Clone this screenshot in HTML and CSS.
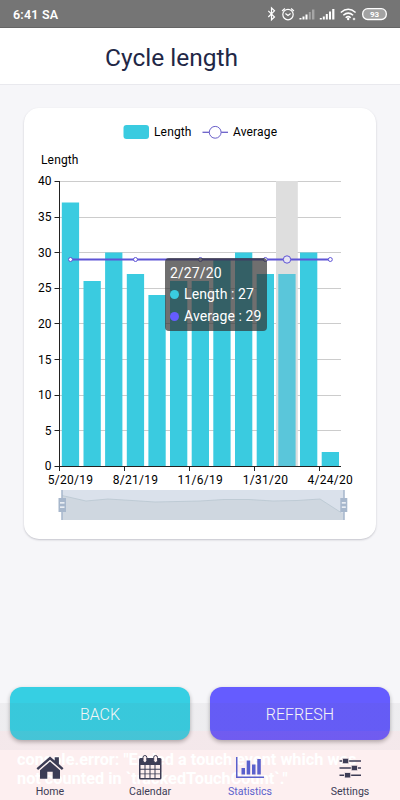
FILE: index.html
```html
<!DOCTYPE html>
<html lang="en">
<head>
    <meta charset="UTF-8">
    <meta name="viewport" content="width=device-width, initial-scale=1.0">
    <title>Cycle length</title>
    <link rel="stylesheet" href="styles.css">
</head>
<body>
    <div class="screen">
        <div class="statusbar">
            <span class="clock">6:41 SA</span>
            <svg class="status-icons" width="122" height="16" viewBox="266 6 122 16">
                <path d="M268.3 10.8l6.2 6.2-3 2.8V8l3 2.8-6.2 6.2" fill="none" stroke="#fff" stroke-width="1.2"/>
                <g fill="none" stroke="#fff" stroke-width="1.2">
                    <circle cx="288" cy="14.6" r="5.2"/>
                    <path d="M285.4 13.6l2.6 2 2.6-2M282.1 11l2.8-2.5M293.9 11l-2.8-2.5"/>
                </g>
                <g fill="#fff">
                    <path d="M299.5 18h2v1.5h-2zM302.5 16.5h2v3h-2zM305.5 14.5h2v5h-2z"/>
                    <path d="M308.8 12h2v7.5h-2zM312 9.5h2.4v10H312z" opacity=".35"/>
                    <path d="M319.8 18h2v1.5h-2zM322.8 16.5h2v3h-2zM325.8 14h2v5.5h-2zM329 11.5h2v8h-2zM332.2 9h2.2v10.5h-2.2z"/>
                </g>
                <path d="M340.8 12.5q7.4-6.5 14.8 0M343.3 15.3q4.9-4.3 9.8 0M345.7 17.7q2.5-2.2 5 0" fill="none" stroke="#fff" stroke-width="1.5"/>
                <circle cx="348.2" cy="19" r="1.2" fill="#fff"/>
                <circle cx="354" cy="19" r="1.3" fill="#ddd"/>
                <rect x="362.7" y="8.7" width="23.6" height="10.8" rx="5" fill="#a2a2a2" stroke="#fff" stroke-width="1.3"/>
                <text class="battery" x="374.5" y="17">93</text>
            </svg>
        </div>

        <header class="header">
            <h1>Cycle length</h1>
        </header>

        <main class="content">
            <div class="card">
                <svg class="chart" width="352" height="431" viewBox="24 108 352 431">
                    <!-- legend -->
                    <rect x="123.5" y="125" width="25.5" height="14" rx="3" fill="#3acbe0"/>
                    <text class="label" x="154" y="136.3">Length</text>
                    <path d="M202.5 132.3h25.5" stroke="#6a5fc9" stroke-width="1.3"/>
                    <circle cx="215.2" cy="132.3" r="5.9" fill="#fff" stroke="#6a5fc9"/>
                    <text class="label" x="233" y="136.3">Average</text>
                    <text class="label" x="41" y="163.5">Length</text>

                    <!-- grid lines -->
                    <path class="grid" d="M60 181.5H341M60 217.5H341M60 252.5H341M60 288.5H341M60 323.5H341M60 359.5H341M60 395.5H341M60 430.5H341"/>

                    <!-- highlighted column -->
                    <rect x="276" y="181" width="21.8" height="285.5" fill="#dedede"/>

                    <g class="bars">
                        <rect x="61.8" y="202.5" width="17.3" height="264"/>
                        <rect x="83.5" y="281" width="17.3" height="185.5"/>
                        <rect x="105.1" y="252.5" width="17.3" height="214"/>
                        <rect x="126.8" y="274" width="17.3" height="192.5"/>
                        <rect x="148.4" y="295" width="17.3" height="171.5"/>
                        <rect x="170" y="281" width="17.3" height="185.5"/>
                        <rect x="191.7" y="281" width="17.3" height="185.5"/>
                        <rect x="213.3" y="259.5" width="17.3" height="207"/>
                        <rect x="235" y="252.5" width="17.3" height="214"/>
                        <rect x="256.7" y="274" width="17.3" height="192.5"/>
                        <rect class="active" x="278.3" y="274" width="17.3" height="192.5"/>
                        <rect x="300" y="252.5" width="17.3" height="214"/>
                        <rect x="321.7" y="452" width="17.3" height="14.5"/>
                    </g>

                    <!-- axes -->
                    <path class="axis" d="M59.5 181V471M54.5 466.5H341M54.5 181.5h5M54.5 217.5h5M54.5 252.5h5M54.5 288.5h5M54.5 323.5h5M54.5 359.5h5M54.5 395.5h5M54.5 430.5h5M124.5 467v4M189.5 467v4M254.5 467v4M319.5 467v4"/>
                    <g class="y-labels">
                        <text x="51.5" y="185.3">40</text>
                        <text x="51.5" y="221">35</text>
                        <text x="51.5" y="256.7">30</text>
                        <text x="51.5" y="292.3">25</text>
                        <text x="51.5" y="328">20</text>
                        <text x="51.5" y="363.6">15</text>
                        <text x="51.5" y="399.2">10</text>
                        <text x="51.5" y="434.8">5</text>
                        <text x="51.5" y="470.3">0</text>
                    </g>
                    <g class="x-labels">
                        <text x="70.5" y="484.3">5/20/19</text>
                        <text x="135.5" y="484.3">8/21/19</text>
                        <text x="200.3" y="484.3">11/6/19</text>
                        <text x="265.5" y="484.3">1/31/20</text>
                        <text x="330.3" y="484.3">4/24/20</text>
                    </g>

                    <!-- average line -->
                    <path d="M70.5 259.5H330.5" stroke="#5f54d6" stroke-width="2"/>
                    <g class="points">
                        <circle cx="70.5" cy="259.5" r="2"/>
                        <circle cx="135.5" cy="259.5" r="2"/>
                        <circle cx="200.4" cy="259.5" r="2"/>
                        <circle cx="265.4" cy="259.5" r="2"/>
                        <circle class="current" cx="287" cy="259.5" r="3.7"/>
                        <circle cx="330.3" cy="259.5" r="2"/>
                    </g>

                    <!-- zoom slider -->
                    <rect x="62" y="490" width="282" height="30" fill="#dae1eb"/>
                    <path d="M62 495.5L86 501 108 499 132 500.5 155 502 178 501.5 200 501 224 499.5 249 499.5 273 501 297 500.5 320 499 341 512.5 344 513V520H62z" fill="#cfd7e0"/>
                    <path d="M62 495.5L86 501 108 499 132 500.5 155 502 178 501.5 200 501 224 499.5 249 499.5 273 501 297 500.5 320 499 341 512.5" fill="none" stroke="#b9c6d1" stroke-width=".8"/>
                    <path d="M62 490v30M344 490v30" stroke="#a7b7cc" stroke-width="1.5"/>
                    <path d="M58.5 498h7.5v14h-7.5zM340.3 498h7v14h-7z" fill="#a7b7cc"/>
                    <path d="M60 502.8h4.5M60 507.2h4.5M341.8 502.8h4M341.8 507.2h4" stroke="#fff" stroke-width="1.2"/>
                </svg>

                <div class="tooltip">
                    <p>2/27/20</p>
                    <p><span class="dot cyan"></span>Length : 27</p>
                    <p><span class="dot violet"></span>Average : 29</p>
                </div>
            </div>
        </main>

        <div class="actions">
            <button class="back">BACK</button>
            <button class="refresh">REFRESH</button>
        </div>

        <div class="warning">
            <p>console.error: "Ended a touch event which was not counted in `trackedTouchCount`."</p>
        </div>

        <nav class="tabs">
            <a class="tab">
                <svg width="30" height="30" viewBox="0 0 30 30" fill="currentColor">
                    <path d="M1.5 15.2L15 3.5l4.7 4V4.2h4.2v6.9l4.6 4.1-1.6 1.8L15 6.7 3.1 17z"/>
                    <path d="M5 17.2l10-8.6 10 8.6v8.6h-7.3v-7h-5.4v7H5z"/>
                </svg>
                Home
            </a>
            <a class="tab">
                <svg width="30" height="30" viewBox="0 0 30 30">
                    <rect x="4" y="5" width="22.5" height="21.5" rx="1.5" fill="currentColor"/>
                    <path d="M5.5 12h4v3.8h-4zM10.5 12h4v3.8h-4zM15.5 12h4v3.8h-4zM20.5 12H25v3.8h-4.5zM5.5 16.7h4v3.7h-4zM10.5 16.7h4v3.7h-4zM15.5 16.7h4v3.7h-4zM20.5 16.7H25v3.7h-4.5zM5.5 21.3h4V25h-4zM10.5 21.3h4V25h-4zM15.5 21.3h4V25h-4zM20.5 21.3H25V25h-4.5z" fill="#fdeff0"/>
                    <rect x="8" y="2.5" width="3.8" height="7" rx="1.9" fill="#fdeff0" stroke="currentColor"/>
                    <rect x="18.7" y="2.5" width="3.8" height="7" rx="1.9" fill="#fdeff0" stroke="currentColor"/>
                </svg>
                Calendar
            </a>
            <a class="tab selected">
                <svg width="30" height="30" viewBox="0 0 30 30" fill="currentColor">
                    <path d="M1 4h1.5v19.5H29V25H1zM6.500 15H10v6.500H6.500zM11.700 7.500h3.500v14h-3.500zM17 11.500h3.500v10H17zM22.300 6h3.500v15.500h-3.500z"/>
                </svg>
                Statistics
            </a>
            <a class="tab">
                <svg width="30" height="30" viewBox="0 0 30 30" fill="currentColor">
                    <path d="M4.5 7.2H26v1.6H4.500zM4.500 14.2H26v1.600H4.500zM4.500 21.400H26V23H4.500z"/>
                    <path d="M7.500 5.300h6.200v5.400H7.500zM16.300 12.300h6.200v5.400h-6.200zM9.500 19.500h6.200v5.400H9.500z" stroke="#fdeff0" stroke-width=".8"/>
                </svg>
                Settings
            </a>
        </nav>
    </div>
</body>
</html>
```
FILE: styles.css
```css
body{
    margin: 0;
    font-family: Roboto, sans-serif;
}

.screen{
    position: relative;
    display: flex;
    flex-direction: column;
    width: 400px;
    height: 800px;
    background-color: #f6f6f9;
    overflow: hidden;
}

.statusbar{
    display: flex;
    justify-content: space-between;
    align-items: center;
    box-sizing: border-box;
    height: 28px;
    padding: 0 12px 0 13px;
    background-color: #757575;
    border-bottom: 1px solid #656565;
    color: white;
}

.clock{
    font-size: 12.5px;
    font-weight: 600;
    letter-spacing: 0.2px;
    padding-top: 2px;
}

.battery{
    fill: white;
    font-size: 8px;
    font-weight: bold;
    text-anchor: middle;
}

.header{
    box-sizing: border-box;
    height: 57px;
    padding: 15px 105px;
    background-color: white;
    border-bottom: 1px solid #e9e9ee;
}

h1{
    margin: 0;
    font-size: 24.5px;
    line-height: 30px;
    font-weight: 400;
    color: #222746;
    white-space: nowrap;
}

.content{
    flex: 1;
    padding: 23px 24px;
}

.card{
    position: relative;
    width: 352px;
    height: 431px;
    border-radius: 15px;
    background-color: white;
    box-shadow: 0 1px 2px rgba(50, 50, 70, 0.25);
}

.chart{
    display: block;
    font-size: 12px;
}

.label{
    letter-spacing: 0.15px;
}

.grid{
    fill: none;
    stroke: #cccccc;
}

.axis{
    fill: none;
    stroke: #222222;
}

.bars{
    fill: #3acbe0;
}

.active{
    fill: #5ac6da;
}

.y-labels{
    text-anchor: end;
}

.x-labels{
    text-anchor: middle;
    letter-spacing: 0.3px;
}

.points{
    fill: white;
    stroke: #5f54d6;
    stroke-width: 1;
}

.current{
    fill: #e6e4f2;
}

.tooltip{
    position: absolute;
    left: 141px;
    top: 150px;
    box-sizing: border-box;
    width: 102px;
    height: 73px;
    padding: 5px;
    border-radius: 4px;
    background-color: rgba(50, 50, 50, 0.7);
    color: white;
    font-size: 14px;
    line-height: 21.3px;
    letter-spacing: 0.1px;
    white-space: nowrap;
}

.tooltip p{
    margin: 0;
}

.dot{
    display: inline-block;
    width: 9px;
    height: 9px;
    margin-right: 5px;
    border-radius: 50%;
}

.cyan{
    background-color: #3acbe0;
}

.violet{
    background-color: #665cff;
}

.actions{
    display: flex;
    gap: 20px;
    padding: 0 10px 10px;
}

.actions button{
    flex: 1;
    height: 53px;
    padding: 2px 0 0;
    border: none;
    border-radius: 12px;
    color: white;
    font-family: inherit;
    font-size: 16px;
    font-weight: 300;
    box-shadow: 0 2px 4px rgba(0, 0, 0, 0.3);
}

.back{
    background-color: #36cfe3;
}

.refresh{
    background-color: #655cff;
}

.warning{
    position: absolute;
    left: 0;
    right: 0;
    bottom: 0;
    height: 97px;
    box-sizing: border-box;
    padding: 47px 30px 0 17px;
    background: linear-gradient(rgba(100, 90, 90, 0.06) 28px, rgba(220, 90, 90, 0.09) 28px 47px, #fdeff0 47px);
}

.warning p{
    margin: 0;
    color: white;
    font-size: 16.3px;
    font-weight: bold;
    line-height: 19px;
}

.tabs{
    display: flex;
    height: 50px;
}

.tab{
    flex: 1;
    display: flex;
    flex-direction: column;
    align-items: center;
    position: relative;
    padding-top: 3px;
    color: #3c3c55;
    font-size: 10.6px;
    line-height: 17px;
}

.tab svg{
    flex-shrink: 0;
}

.selected{
    color: #5a60cc;
}
```
